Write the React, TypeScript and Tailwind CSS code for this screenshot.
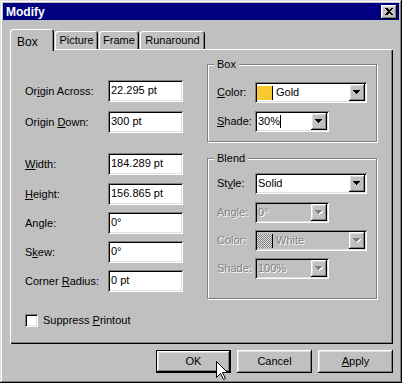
import React from "react";

const raised =
  "shadow-[inset_-1px_-1px_#000,inset_1px_1px_#fff,inset_-2px_-2px_#808080,inset_2px_2px_#dfdfdf]";
const sunken =
  "shadow-[inset_1px_1px_#808080,inset_-1px_-1px_#fff,inset_2px_2px_#000,inset_-2px_-2px_#dfdfdf]";
const dim = "text-[#808080] [text-shadow:1px_1px_0_#fff]";

function Field({ value }: { value: string }) {
  return (
    <div className={`w-[75px] h-[22px] bg-white ${sunken} flex items-center pl-[3px] pb-[1px]`}>
      {value}
    </div>
  );
}

function Row({ label, value, className = "" }: { label: React.ReactNode; value: string; className?: string }) {
  return (
    <div className={`flex items-center h-[22px] ${className}`}>
      <div className="w-[83px]">{label}</div>
      <Field value={value} />
    </div>
  );
}

function Arrow({ disabled }: { disabled?: boolean }) {
  return (
    <div className={`w-[16px] h-[17px] mr-[2px] bg-[#c0c0c0] ${raised} flex items-center justify-center`}>
      <svg width="8" height="5" viewBox="0 0 8 5" shapeRendering="crispEdges">
        {disabled && <path d="M1 1h7L4.5 5z" fill="#fff" />}
        <path d="M0 0h7L3.5 4z" fill={disabled ? "#808080" : "#000"} />
      </svg>
    </div>
  );
}

function Select({
  className,
  disabled,
  children,
}: {
  className: string;
  disabled?: boolean;
  children: React.ReactNode;
}) {
  return (
    <div
      className={`h-[21px] ${sunken} flex items-center ${disabled ? "bg-[#c0c0c0]" : "bg-white"} ${className}`}
    >
      <div className="flex-1 flex items-center h-full pl-[2px]">{children}</div>
      <Arrow disabled={disabled} />
    </div>
  );
}

function GroupRow({ label, children, className = "" }: { label: React.ReactNode; children: React.ReactNode; className?: string }) {
  return (
    <div className={`flex items-center h-[21px] ${className}`}>
      <div className="w-[38px]">{label}</div>
      {children}
    </div>
  );
}

function Group({ title, className, children }: { title: string; className: string; children: React.ReactNode }) {
  return (
    <div
      className={`relative w-[170px] border border-[#808080] shadow-[1px_1px_0_#fff,inset_1px_1px_0_#fff] pl-[9px] ${className}`}
    >
      <span className="absolute -top-[8px] left-[6px] px-[3px] bg-[#c0c0c0] leading-[14px]">{title}</span>
      {children}
    </div>
  );
}

export default function App() {
  return (
    <div className="relative w-[402px] h-[383px] bg-[#c0c0c0] p-[3px] flex flex-col font-['Liberation_Sans',Arial,sans-serif] text-[11px] text-black shadow-[inset_-1px_-1px_#000,inset_1px_1px_#dfdfdf,inset_-2px_-2px_#808080,inset_2px_2px_#fff]">
      {/* Title bar */}
      <div className="h-[17px] bg-[#000080] flex items-center justify-between pl-[3px] pr-[2px]">
        <span className="text-white font-bold text-[12px] leading-none">Modify</span>
        <div className={`w-[16px] h-[14px] bg-[#c0c0c0] ${raised} flex items-center justify-center`}>
          <svg width="8" height="7" viewBox="0 0 8 7" shapeRendering="crispEdges">
            <path d="M0 0h2l2 2 2-2h2L5 3.5 8 7H6L4 5 2 7H0l3-3.5z" fill="#000" />
          </svg>
        </div>
      </div>

      {/* Tabs */}
      <div className="mt-[9px] ml-[7px] flex items-end gap-[1px]">
        <div className="relative z-10 w-[44px] h-[22px] -mb-[2px] rounded-t-[3px] bg-[#c0c0c0] shadow-[inset_1px_1px_#fff,inset_-1px_0_#000,inset_-2px_0_#808080] flex items-start pl-[7px] pt-[4px] text-[12px]">
          Box
        </div>
        <div className="w-[43px] h-[18px] rounded-t-[3px] shadow-[inset_1px_1px_#fff,inset_-1px_0_#000,inset_-2px_0_#808080] flex items-center justify-center">
          Picture
        </div>
        <div className="w-[40px] h-[18px] rounded-t-[3px] shadow-[inset_1px_1px_#fff,inset_-1px_0_#000,inset_-2px_0_#808080] flex items-center justify-center">
          Frame
        </div>
        <div className="w-[65px] h-[18px] rounded-t-[3px] shadow-[inset_1px_1px_#fff,inset_-1px_0_#000,inset_-2px_0_#808080] flex items-center justify-center">
          Runaround
        </div>
      </div>

      {/* Panel */}
      <div className="ml-[7px] w-[383px] h-[295px] shadow-[inset_1px_1px_#fff,inset_-1px_-1px_#000,inset_-2px_-2px_#808080] flex pl-[15px]">
        <div className="pt-[31px] flex flex-col">
          <Row label={<>Or<u>i</u>gin Across:</>} value="22.295 pt" />
          <Row label={<>Origin <u>D</u>own:</>} value="300 pt" className="mt-[9px]" />
          <Row label={<><u>W</u>idth:</>} value="184.289 pt" className="mt-[20px]" />
          <Row label={<><u>H</u>eight:</>} value="156.865 pt" className="mt-[8px]" />
          <Row label="Angle:" value="0°" className="mt-[7px]" />
          <Row label={<>S<u>k</u>ew:</>} value="0°" className="mt-[7px]" />
          <Row label={<>Corner <u>R</u>adius:</>} value="0 pt" className="mt-[7px]" />
          <div className="mt-[20px] flex items-center gap-[5px]">
            <div className={`w-[13px] h-[13px] bg-white ${sunken}`} />
            <span>
              Suppress <u>P</u>rintout
            </span>
          </div>
        </div>

        <div className="ml-[24px] flex flex-col">
          <Group title="Box" className="mt-[15px] h-[78px] pt-[17px]">
            <GroupRow label={<><u>C</u>olor:</>}>
              <Select className="w-[112px]">
                <div className="w-[16px] h-[14px] bg-[#f8c830] border-r border-black" />
                <span className="ml-[3px]">Gold</span>
              </Select>
            </GroupRow>
            <GroupRow label={<><u>S</u>hade:</>} className="mt-[8px]">
              <Select className="w-[74px]">
                <span className="pl-[1px]">30%</span>
                <span className="w-[1px] h-[13px] bg-black" />
              </Select>
            </GroupRow>
          </Group>

          <Group title="Blend" className="mt-[16px] h-[141px] pt-[14px]">
            <GroupRow label={<>St<u>y</u>le:</>}>
              <Select className="w-[112px]">
                <span className="pl-[1px]">Solid</span>
              </Select>
            </GroupRow>
            <GroupRow label={<span className={dim}>Angle:</span>} className="mt-[8px]">
              <Select className="w-[74px]" disabled>
                <span className={`pl-[1px] ${dim}`}>0°</span>
              </Select>
            </GroupRow>
            <GroupRow label={<span className={dim}>Color:</span>} className="mt-[7px]">
              <Select className="w-[112px]" disabled>
                <div className="w-[16px] h-[14px] bg-[repeating-conic-gradient(#808080_0_25%,#dfdfdf_0_50%)] bg-[length:2px_2px] border-r border-black" />
                <span className={`ml-[3px] ${dim}`}>White</span>
              </Select>
            </GroupRow>
            <GroupRow label={<span className={dim}>Shade:</span>} className="mt-[7px]">
              <Select className="w-[74px]" disabled>
                <span className={`pl-[1px] ${dim}`}>100%</span>
              </Select>
            </GroupRow>
          </Group>
        </div>
      </div>

      {/* Buttons */}
      <div className="ml-[7px] w-[383px] mt-[6px] flex justify-end gap-[6px]">
        <button className="w-[75px] h-[23px] bg-[#c0c0c0] shadow-[inset_0_0_0_1px_#000,inset_-2px_-2px_#000,inset_2px_2px_#fff,inset_-3px_-3px_#808080,inset_3px_3px_#dfdfdf] flex items-center justify-center">
          OK
        </button>
        <button className={`w-[75px] h-[23px] bg-[#c0c0c0] ${raised} flex items-center justify-center`}>
          Cancel
        </button>
        <button className={`w-[75px] h-[23px] bg-[#c0c0c0] ${raised} flex items-center justify-center`}>
          <span>
            <u>A</u>pply
          </span>
        </button>
      </div>

      {/* Mouse pointer */}
      <svg className="absolute left-[216px] top-[361px]" width="13" height="20" viewBox="0 0 13 20">
        <path d="M0.5 0.5V16.5L4.5 12.5L7.5 18.5L9.5 17.5L6.5 11.5H11.5Z" fill="#fff" stroke="#000" strokeWidth="1" />
      </svg>
    </div>
  );
}
